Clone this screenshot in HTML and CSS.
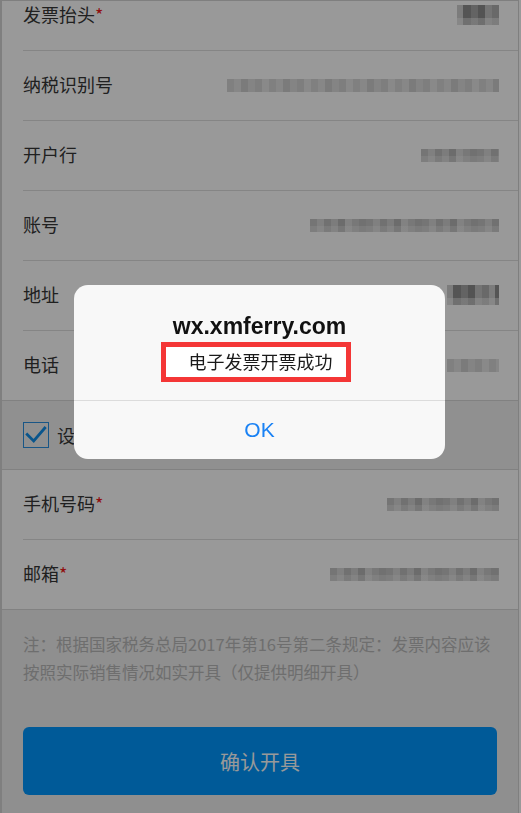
FILE: index.html
```html
<!DOCTYPE html>
<html lang="zh-CN">
<head>
    <meta charset="UTF-8">
    <title>开具发票</title>
    <link rel="stylesheet" href="styles.css">
</head>
<body>
    <div class="frame">
        <div class="page">
            <div class="form">
                <div class="group">
                    <div class="row">
                        <span class="label">发票抬头<i class="star">*</i></span>
                        <span class="blur dark" style="width: 42px"></span>
                    </div>
                    <div class="row">
                        <span class="label">纳税识别号</span>
                        <span class="blur light" style="width: 272px"></span>
                    </div>
                    <div class="row">
                        <span class="label">开户行</span>
                        <span class="blur" style="width: 78px"></span>
                    </div>
                    <div class="row">
                        <span class="label">账号</span>
                        <span class="blur" style="width: 189px"></span>
                    </div>
                    <div class="row">
                        <span class="label">地址</span>
                        <span class="blur dark" style="width: 52px"></span>
                    </div>
                    <div class="row">
                        <span class="label">电话</span>
                        <span class="blur light" style="width: 52px"></span>
                    </div>
                </div>

                <div class="default-row">
                    <span class="checkbox">
                        <svg viewBox="0 0 26 26" width="24" height="24">
                            <path d="M3.5 12.5 L10.5 19.5 L22.5 5.5" fill="none" stroke="#108ee9" stroke-width="3" stroke-linecap="square"/>
                        </svg>
                    </span>
                    <span class="default-text">设为默认发票信息</span>
                </div>

                <div class="group">
                    <div class="row">
                        <span class="label">手机号码<i class="star">*</i></span>
                        <span class="blur" style="width: 112px"></span>
                    </div>
                    <div class="row">
                        <span class="label">邮箱<i class="star">*</i></span>
                        <span class="blur" style="width: 169px"></span>
                    </div>
                </div>

                <div class="footer">
                    <p class="note">注：根据国家税务总局2017年第16号第二条规定：发票内容应该按照实际销售情况如实开具（仅提供明细开具）</p>
                    <button class="submit">确认开具</button>
                </div>
            </div>
        </div>
    </div>

    <!-- 弹窗遮罩 -->
    <div class="mask"></div>
    <div class="alert">
        <div class="alert-body">
            <h3 class="alert-title">wx.xmferry.com</h3>
            <div class="alert-msg">电子发票开票成功</div>
        </div>
        <div class="alert-btn">OK</div>
    </div>
</body>
</html>
```

FILE: styles.css
```css
* {
    margin: 0;
    padding: 0;
    box-sizing: border-box;
}
html, body {
    height: 100%;
    background: #fff;
}
body {
    font-family: "Noto Sans CJK SC", "Liberation Sans", sans-serif;
    color: #363636;
    overflow: hidden;
}
.frame {
    width: 519px;
    height: 813px;
    border-left: 2px solid #d4d4d4;
    border-top: 1px solid #d4d4d4;
    border-right: 1px solid #d4d4d4;
}
.page {
    height: 100%;
    overflow: hidden;
    background: #eee;
}
.form {
    margin-top: -20px;
}
.group {
    background: #fff;
    border-bottom: 1px solid #d8d8d8;
}
.row {
    height: 70px;
    margin-left: 21px;
    padding-right: 19px;
    padding-bottom: 3px;
    display: flex;
    align-items: center;
    justify-content: space-between;
    border-bottom: 1px solid #dedede;
}
.row:last-child {
    height: 69px;
    border-bottom: none;
}
.label {
    font-size: 18px;
    line-height: 24px;
}
.star {
    font-style: normal;
    color: #f01818;
}
/* 打码的内容 */
.blur {
    display: block;
    height: 13px;
    margin-top: 2px;
    background-image:
        linear-gradient(180deg, rgba(255,255,255,0) 0 7px, rgba(255,255,255,.25) 7px 13px),
        linear-gradient(90deg, #c4c4c4 0 7px, #d6d6d6 7px 14px, #bcbcbc 14px 21px, #cfcfcf 21px 28px, #b4b4b4 28px 35px, #d9d9d9 35px 42px, #c8c8c8 42px 49px, #bdbdbd 49px 56px);
    background-size: 100% 100%, 56px 100%;
}
.blur.dark {
    height: 20px;
    background-image:
        linear-gradient(180deg, rgba(255,255,255,0) 0 13px, rgba(255,255,255,.4) 13px 20px),
        linear-gradient(90deg, #cfcfcf 0 6px, #8e8e8e 6px 14px, #a6a6a6 14px 21px, #8a8a8a 21px 28px, #c2c2c2 28px 35px, #b0b0b0 35px 42px);
    background-size: 100% 100%, 42px 100%;
}
.blur.light {
    background-image:
        linear-gradient(90deg, #d6d6d6 0 7px, #e2e2e2 7px 14px, #cdcdcd 14px 21px, #dcdcdc 21px 28px, #d2d2d2 28px 35px, #e4e4e4 35px 42px);
    background-size: 42px 100%;
}
.default-row {
    height: 69px;
    background: #f0f0f0;
    border-bottom: 1px solid #d8d8d8;
    padding-left: 21px;
    display: flex;
    align-items: center;
}
.checkbox {
    width: 26px;
    height: 26px;
    border: 1px solid #2b8fe0;
    display: flex;
    align-items: center;
    justify-content: center;
}
.default-text {
    margin-left: 8px;
    font-size: 18px;
}
.footer {
    padding: 20px 21px 0;
}
.note {
    padding-right: 6px;
    font-size: 16.5px;
    line-height: 28px;
    color: #b8b8b8;
}
.submit {
    display: block;
    width: 100%;
    height: 68px;
    margin-top: 41px;
    border: none;
    border-radius: 6px;
    background: #0096fe;
    color: #fff;
    font-family: inherit;
    font-size: 20px;
}
.mask {
    position: fixed;
    left: 0;
    top: 0;
    right: 0;
    bottom: 0;
    background: rgba(0,0,0,.4);
}
.alert {
    position: fixed;
    left: 74px;
    top: 285px;
    width: 371px;
    background: #f8f8f8;
    border-radius: 14px;
    overflow: hidden;
}
.alert-body {
    padding: 28px 0 18px;
    text-align: center;
    border-bottom: 1px solid #dcdcdc;
}
.alert-title {
    font-family: "Liberation Sans", sans-serif;
    font-size: 23px;
    line-height: 26px;
    font-weight: bold;
    color: #111;
}
.alert-msg {
    display: inline-block;
    width: 190px;
    height: 40px;
    margin: 3px 7px 0 0;
    padding-left: 9px;
    border: 5px solid #f43636;
    background: #fff;
    font-size: 18px;
    line-height: 29px;
    color: #1a1a1a;
}
.alert-btn {
    height: 58px;
    line-height: 58px;
    text-align: center;
    font-family: "Liberation Sans", sans-serif;
    font-size: 21px;
    color: #1a82f4;
}
```
